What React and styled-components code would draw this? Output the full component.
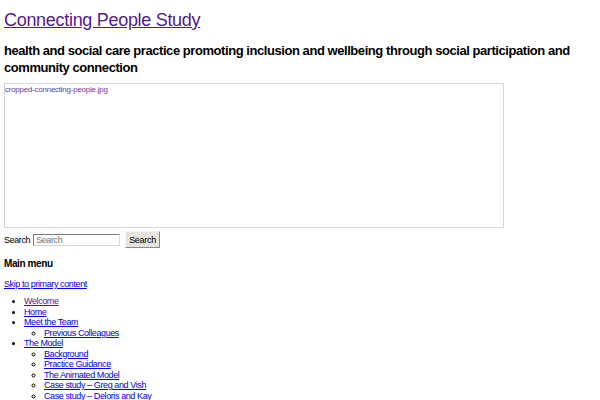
import React from 'react';
import styled, { createGlobalStyle } from 'styled-components';

const GlobalStyle = createGlobalStyle`
    body {
        margin: 0;
        padding: 0;
        background: #ffffff;
        font-family: "Liberation Sans", Arial, sans-serif;
        font-size: 9px;
        letter-spacing: -0.4px;
        color: #000000;
    }
    a { color: #0000ee; }
    a.visited { color: #551a8b; }
`;

const Page = styled.div`
    padding: 0 4px;
`;

const SiteTitle = styled.h1`
    margin: 10px 0 0;
    font-size: 18px;
    font-weight: normal;
    letter-spacing: -0.3px;
    line-height: 21px;
`;

const Tagline = styled.h2`
    margin: 11px 0 0;
    font-size: 13px;
    font-weight: bold;
    letter-spacing: -0.44px;
    line-height: 17px;
    max-width: 590px;
`;

const HeaderImage = styled.a`
    display: block;
    box-sizing: border-box;
    margin-top: 7px;
    width: 500px;
    height: 145px;
    border: 1px solid #d8d8d8;
    border-left-color: #cfcfcf;
    padding: 1px 0 0 0;
    font-size: 8px;
    letter-spacing: -0.25px;
    text-decoration: none;
    color: #6a3d9a;
`;

const SearchForm = styled.form`
    display: flex;
    align-items: center;
    gap: 3px;
    margin-top: 3px;
    height: 17px;
`;

const Label = styled.label`
    font-size: 9px;
`;

const Input = styled.input`
    box-sizing: border-box;
    width: 87px;
    height: 12px;
    padding: 0 2px;
    font-family: inherit;
    font-size: 9px;
    letter-spacing: -0.4px;
    border: 1px solid #7a7a7a;
    border-right-color: #d8d8d8;
    border-bottom-color: #d8d8d8;
    ::placeholder { color: #b0b0b0; }
`;

const Button = styled.button`
    box-sizing: border-box;
    height: 17px;
    padding: 0 3px;
    margin-left: 2px;
    font-family: inherit;
    font-size: 9px;
    letter-spacing: -0.3px;
    color: #000000;
    background: #e6e3dc;
    border: 1px solid #8a8a8a;
    border-top-color: #f4f4f4;
    border-left-color: #f4f4f4;
`;

const MenuTitle = styled.h3`
    margin: 10px 0 0;
    font-size: 10px;
    font-weight: bold;
    line-height: 12px;
`;

const Skip = styled.a`
    display: block;
    margin-top: 9px;
    line-height: 10px;
`;

const List = styled.ul`
    margin: ${p => (p.nested ? '0' : '7px 0 0')};
    padding-left: 20px;
    list-style-type: ${p => (p.nested ? 'circle' : 'disc')};
    line-height: 10.5px;
`;

const menu = [
    { label: 'Welcome', visited: true },
    { label: 'Home' },
    { label: 'Meet the Team', children: ['Previous Colleagues'] },
    {
        label: 'The Model',
        children: [
            'Background',
            'Practice Guidance',
            'The Animated Model',
            'Case study \u2013 Greg and Vish',
            'Case study \u2013 Deloris and Kay',
            'Case study \u2013 Steve and Sue',
        ],
    },
    { label: 'Resources' },
];

const App = () => (
    <Page>
        <GlobalStyle />
        <SiteTitle><a className="visited" href="#">Connecting People Study</a></SiteTitle>
        <Tagline>health and social care practice promoting inclusion and wellbeing through social participation and community connection</Tagline>
        <HeaderImage href="#">cropped-connecting-people.jpg</HeaderImage>
        <SearchForm onSubmit={e => e.preventDefault()}>
            <Label>Search</Label>
            <Input type="text" placeholder="Search" />
            <Button type="submit">Search</Button>
        </SearchForm>
        <MenuTitle>Main menu</MenuTitle>
        <Skip href="#">Skip to primary content</Skip>
        <List>
            {menu.map(item => (
                <li key={item.label}>
                    <a className={item.visited ? 'visited' : undefined} href="#">{item.label}</a>
                    {item.children && (
                        <List nested>
                            {item.children.map(c => (
                                <li key={c}><a href="#">{c}</a></li>
                            ))}
                        </List>
                    )}
                </li>
            ))}
        </List>
    </Page>
);

export default App;
